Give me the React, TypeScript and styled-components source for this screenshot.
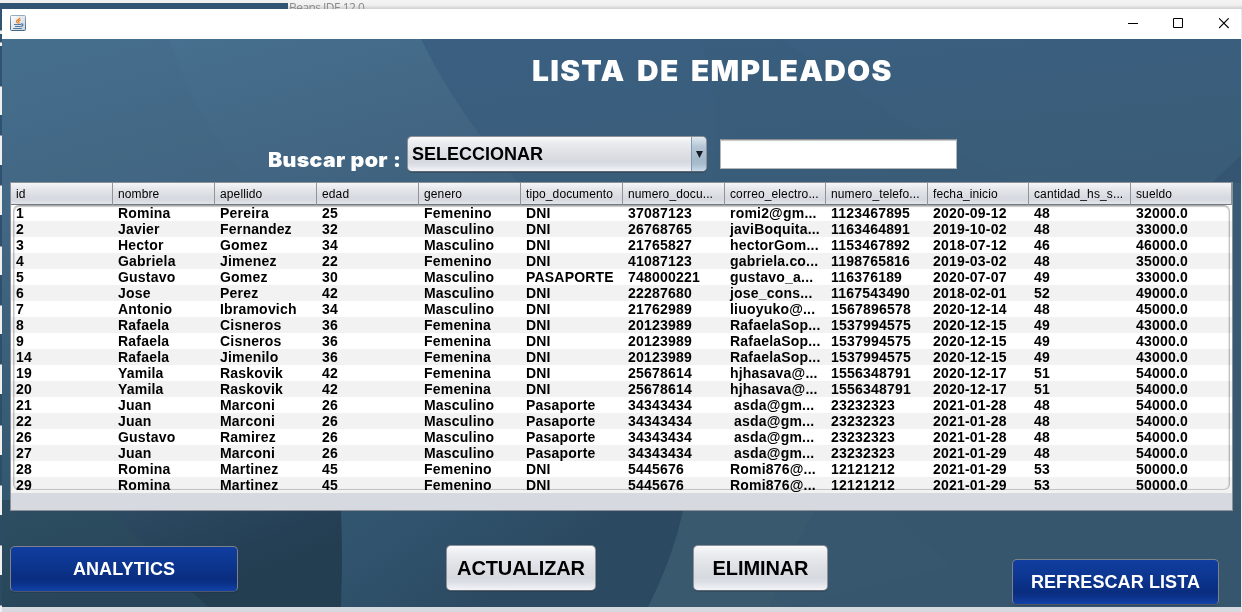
import React from "react";
import styled, { createGlobalStyle, css } from "styled-components";

const Global = createGlobalStyle`
  * { box-sizing: border-box; }
  body { margin: 0; overflow: hidden; font-family: "Liberation Sans", Arial, sans-serif; }
`;

const Desktop = styled.div`
  width: 1242px;
  height: 612px;
  display: grid;
  grid-template: 9px 603px / 2px 1239px 1px;
  overflow: hidden;
  background: #d6d9df;
`;

const BackdropTop = styled.div`
  grid-column: 1 / -1;
  display: flex;
  overflow: hidden;
  background: linear-gradient(#f4f4f4 0, #f0f0f0 5px, #cfcfcf 9px);
`;

const BackdropPanel = styled.div`
  width: 288px;
  height: 9px;
  flex: none;
  border-top: 3px solid #efefef;
  background: #315474;
`;

const BackdropTitle = styled.span`
  margin: 1px 0 0 1px;
  font: 12px/14px "Open Sans", sans-serif;
  letter-spacing: -0.55px;
  color: #8a8a8a;
  white-space: nowrap;
`;

const BackdropEdge = styled.div`
  display: flex;
  flex-direction: column;
  background: linear-gradient(#315474, #2b4b63);
  overflow: hidden;
`;

const EdgeField = styled.i<{ $gap: number; $size: number }>`
  flex: none;
  width: 2px;
  height: ${(p) => p.$size}px;
  margin-top: ${(p) => p.$gap}px;
  background: #f0f0f0;
  border-top: 1px solid #9a9fa6;
`;

const RightEdge = styled.div`
  background: #e6eaf0;
`;

const Window = styled.main`
  display: flex;
  flex-direction: column;
  overflow: hidden;
`;

const TitleBar = styled.header`
  height: 30px;
  flex: none;
  display: flex;
  align-items: flex-start;
  justify-content: space-between;
  padding: 6px 11px 0 8px;
  background: #fff;
`;

const WindowControls = styled.div`
  display: flex;
  gap: 35px;
  padding-top: 3px;
  svg { display: block; }
`;

const Content = styled.section`
  position: relative;
  height: 568px;
  flex: none;
  padding: 0 8px;
  overflow: hidden;
`;

const Wallpaper = styled.svg`
  position: absolute;
  inset: 0;
`;

const Layer = styled.div`
  position: relative;
  display: flex;
  flex-direction: column;
`;

const heavy = css`
  font-family: Inter, "Liberation Sans", sans-serif;
  font-weight: 900;
  color: #fff;
  white-space: nowrap;
  transform-origin: 0 0;
`;

const Heading = styled.h1`
  ${heavy}
  height: 97px;
  width: 400px;
  margin: 0 0 0 522px;
  padding: 15px 0 0;
  font-size: 28px;
  line-height: 34px;
  letter-spacing: 1.2px;
  word-spacing: 4px;
  transform: scaleX(1.068);
`;

const SearchRow = styled.div`
  display: flex;
  align-items: flex-start;
  height: 46px;
  padding-left: 257px;
`;

const SearchLabel = styled.label`
  ${heavy}
  width: 139px;
  margin-left: 1px;
  padding: 12px 0 0;
  font-size: 20px;
  line-height: 24px;
  letter-spacing: 0.3px;
  word-spacing: 0.5px;
  transform: scaleX(1.065);
`;

const silver = css`
  background: linear-gradient(#fbfbfc 0%, #ecedf0 16%, #dfe1e6 45%, #d6d9df 72%, #dcdfe5 82%, #f2f4f8 100%);
`;

const Select = styled.button`
  ${silver}
  display: flex;
  width: 300px;
  height: 36px;
  padding: 0;
  border: 1px solid #8d9097;
  border-bottom-color: #62676f;
  border-radius: 5px;
  overflow: hidden;
  font: bold 18px/35px "Liberation Sans", Arial, sans-serif;
  text-align: left;
  color: #000;
  box-shadow: 0 1px 0 rgba(20, 40, 60, 0.3);
`;

const SelectValue = styled.span`
  flex: 1;
  padding-left: 4px;
`;

const SelectArrow = styled.span`
  width: 15px;
  height: 34px;
  display: flex;
  align-items: center;
  justify-content: center;
  border-left: 1px solid #8197aa;
  background: linear-gradient(#dfe8ef 0%, #b5c7d6 28%, #a3b8ca 65%, #a8bccd 80%, #c8dbea 100%);
`;

const SearchInput = styled.input`
  width: 237px;
  height: 30px;
  margin: 3px 0 0 13px;
  border: 1px solid #b4b5b8;
  border-top-color: #8d8e8f;
  background: #fff;
  box-shadow: inset 0 2px 1px -1px #c4c6c9;
  outline: 0;
`;

const TableFrame = styled.div`
  position: relative;
  width: 1223px;
  height: 329px;
  border: 1px solid #8d9097;
  background: #d6d9df;
`;

const columns = "repeat(7, 102px) 101px 102px 101px 102px 101px";

const HeaderRow = styled.div`
  display: grid;
  grid-template-columns: ${columns};
  height: 22px;
  border-bottom: 1px solid #73777e;
  background: linear-gradient(#f5f6f8 0%, #e4e6ea 30%, #d8dbe1 65%, #d6d9df 80%, #e2e5ea 100%);
`;

const HeaderCell = styled.div`
  padding-left: 5px;
  border-right: 1px solid #8f939a;
  font-size: 12px;
  line-height: 22px;
  letter-spacing: 0.12px;
  color: #000;
  white-space: nowrap;
`;

const Row = styled.div`
  display: grid;
  grid-template-columns: ${columns};
  height: 16px;
  background: #fff;
  &:nth-child(even) { background: #f2f2f2; }
`;

const Cell = styled.div`
  padding-left: 5px;
  font-size: 14px;
  font-weight: bold;
  line-height: 16px;
  letter-spacing: 0.2px;
  color: #000;
  white-space: pre;
`;

const InnerFrame = styled.div`
  position: absolute;
  left: 2px;
  top: 22px;
  width: 1217px;
  height: 285px;
  border: 1px solid #c2c2c2;
  border-top-color: #a8aaac;
  border-bottom-color: #cfcfcf;
  border-radius: 6px;
  box-shadow: inset 0 1px 1px rgba(0, 0, 0, 0.22), inset 1px 0 1px rgba(0, 0, 0, 0.1), inset -1px 0 1px rgba(0, 0, 0, 0.08);
  mix-blend-mode: multiply;
  pointer-events: none;
`;

const Actions = styled.div`
  display: flex;
  align-items: flex-start;
  padding-top: 34px;
`;

const ActionButton = styled.button<{ $primary?: boolean; $width: number; $left?: number; $top?: number }>`
  ${silver}
  width: ${(p) => p.$width}px;
  height: 46px;
  flex: none;
  margin: ${(p) => p.$top ?? 0}px 0 0 ${(p) => p.$left ?? 0}px;
  padding: 0;
  border: 1px solid #8d9097;
  border-bottom-color: #62676f;
  border-radius: 5px;
  font: bold 20px/44px "Liberation Sans", Arial, sans-serif;
  letter-spacing: -0.1px;
  color: #000;
  white-space: nowrap;
  box-shadow: 0 1px 0 rgba(20, 40, 60, 0.25);
  ${(p) =>
    p.$primary &&
    css`
      border-color: #7d8289;
      border-bottom-color: #4d5869;
      font-size: 18px;
      letter-spacing: 0.1px;
      color: #fff;
      background: linear-gradient(#103da0 0%, #0d3791 35%, #092d80 73%, #0b3187 82%, #1141a8 100%);
    `}
`;

const StatusEdge = styled.div`
  height: 5px;
  background: #d6d9df;
`;

const headers = [
  "id", "nombre", "apellido", "edad", "genero", "tipo_documento",
  "numero_docu...", "correo_electro...", "numero_telefo...", "fecha_inicio", "cantidad_hs_s...", "sueldo",
];

const employees = [
  "1|Romina|Pereira|25|Femenino|DNI|37087123|romi2@gm...|1123467895|2020-09-12|48|32000.0",
  "2|Javier|Fernandez|32|Masculino|DNI|26768765|javiBoquita...|1163464891|2019-10-02|48|33000.0",
  "3|Hector|Gomez|34|Masculino|DNI|21765827|hectorGom...|1153467892|2018-07-12|46|46000.0",
  "4|Gabriela|Jimenez|22|Femenino|DNI|41087123|gabriela.co...|1198765816|2019-03-02|48|35000.0",
  "5|Gustavo|Gomez|30|Masculino|PASAPORTE|748000221|gustavo_a...|116376189|2020-07-07|49|33000.0",
  "6|Jose|Perez|42|Masculino|DNI|22287680|jose_cons...|1167543490|2018-02-01|52|49000.0",
  "7|Antonio|Ibramovich|34|Masculino|DNI|21762989|liuoyuko@...|1567896578|2020-12-14|48|45000.0",
  "8|Rafaela|Cisneros|36|Femenina|DNI|20123989|RafaelaSop...|1537994575|2020-12-15|49|43000.0",
  "9|Rafaela|Cisneros|36|Femenina|DNI|20123989|RafaelaSop...|1537994575|2020-12-15|49|43000.0",
  "14|Rafaela|Jimenilo|36|Femenina|DNI|20123989|RafaelaSop...|1537994575|2020-12-15|49|43000.0",
  "19|Yamila|Raskovik|42|Femenina|DNI|25678614|hjhasava@...|1556348791|2020-12-17|51|54000.0",
  "20|Yamila|Raskovik|42|Femenina|DNI|25678614|hjhasava@...|1556348791|2020-12-17|51|54000.0",
  "21|Juan|Marconi|26|Masculino|Pasaporte|34343434| asda@gm...|23232323|2021-01-28|48|54000.0",
  "22|Juan|Marconi|26|Masculino|Pasaporte|34343434| asda@gm...|23232323|2021-01-28|48|54000.0",
  "26|Gustavo|Ramirez|26|Masculino|Pasaporte|34343434| asda@gm...|23232323|2021-01-28|48|54000.0",
  "27|Juan|Marconi|26|Masculino|Pasaporte|34343434| asda@gm...|23232323|2021-01-29|48|54000.0",
  "28|Romina|Martinez|45|Femenino|DNI|5445676|Romi876@...|12121212|2021-01-29|53|50000.0",
  "29|Romina|Martinez|45|Femenino|DNI|5445676|Romi876@...|12121212|2021-01-29|53|50000.0",
].map((line) => line.split("|"));

// [gap above, height] of the light fields peeking out on the left
const edgeFields = [
  [21, 4], [8, 4], [40, 29], [20, 30], [20, 30], [31, 29], [30, 29], [30, 30], [31, 30], [30, 30], [30, 30], [30, 7],
];

const JavaIcon = () => (
  <svg width="16" height="16" viewBox="0 0 16 16">
    <defs>
      <linearGradient id="cup" x1="0" y1="0" x2="1" y2="1">
        <stop offset="0" stopColor="#fff" />
        <stop offset="1" stopColor="#c5d0da" />
      </linearGradient>
      <linearGradient id="rim" x1="0" y1="0" x2="0" y2="1">
        <stop offset="0" stopColor="#94aabd" />
        <stop offset="1" stopColor="#456784" />
      </linearGradient>
    </defs>
    <rect x="0.5" y="0.5" width="15" height="15" rx="1" fill="url(#cup)" stroke="url(#rim)" />
    <path d="M9.8 2.6C10.2 4.4 6.4 4.7 6.5 6.5c.1.9 1 1.2 1.2 1.9M10.6 4.8C8.8 5.6 8.2 6.3 8.8 7.1c.4.5.2 1-.1 1.4" fill="none" stroke="#e8842c" strokeWidth="1.3" />
    <path d="M4 9.5h7M5 11.5h5.5M11 9c2.6-.5 2.4 2-.2 2.4M3.2 13.5h8.6" fill="none" stroke="#4f7ba3" strokeWidth="1.2" />
  </svg>
);

const Background = () => (
  <Wallpaper width="1239" height="568" viewBox="2 39 1239 568">
    <defs>
      <linearGradient id="base" gradientUnits="userSpaceOnUse" x1="150" y1="39" x2="300" y2="607">
        <stop offset="0" stopColor="#46708f" />
        <stop offset="0.25" stopColor="#426683" />
        <stop offset="0.7" stopColor="#345770" />
        <stop offset="1" stopColor="#28465c" />
      </linearGradient>
      <linearGradient id="right" gradientUnits="userSpaceOnUse" x1="700" y1="39" x2="760" y2="607">
        <stop offset="0" stopColor="#3a5f80" />
        <stop offset="0.25" stopColor="#3a5d79" />
        <stop offset="1" stopColor="#36566c" />
      </linearGradient>
      <linearGradient id="band" gradientUnits="userSpaceOnUse" x1="400" y1="500" x2="480" y2="620">
        <stop offset="0" stopColor="#32556f" />
        <stop offset="1" stopColor="#2b4961" />
      </linearGradient>
      <linearGradient id="corner" gradientUnits="userSpaceOnUse" x1="130" y1="500" x2="170" y2="607">
        <stop offset="0" stopColor="#2c4a63" />
        <stop offset="1" stopColor="#233d51" />
      </linearGradient>
      <linearGradient id="low" gradientUnits="userSpaceOnUse" x1="0" y1="500" x2="30" y2="607">
        <stop offset="0" stopColor="#2d4e62" />
        <stop offset="1" stopColor="#28465a" />
      </linearGradient>
    </defs>
    <rect x="2" y="39" width="1239" height="568" fill="url(#base)" />
    <path d="M2 39H169Q192 113 250 183L2 183Z" fill="#406581" opacity="0.18" />
    <path d="M421 39Q455 110 520 185L700 400L683 511H1241V39Z" fill="url(#right)" />
    <path d="M700 39Q725 115 712 182H1010L900 120L780 39Z" fill="#3a5b72" opacity="0.12" />
    <path d="M1241 155L1212 183H1241Z" fill="#31506e" opacity="0.55" />
    <rect x="2" y="500" width="340" height="107" fill="url(#low)" />
    <path d="M110 507Q155 560 208 607H341Q343 555 341 507Z" fill="url(#corner)" />
    <path d="M341 507H684Q673 558 648 607H341Q343 555 341 507Z" fill="url(#band)" />
    <path d="M684 507Q673 558 648 607H1241V507Z" fill="#36566d" />
    <path d="M684 507Q673 558 648 607H770Q790 555 817 507Z" fill="#3b5c72" opacity="0.5" />
    <path d="M817 507H885L952 567L790 607H770Q790 555 817 507Z" fill="#3a5b70" opacity="0.3" />
  </Wallpaper>
);

export default function App() {
  return (
    <>
      <Global />
      <Desktop>
        <BackdropTop>
          <BackdropPanel />
          <BackdropTitle>Beans IDE 12.0</BackdropTitle>
        </BackdropTop>
        <BackdropEdge>
          {edgeFields.map(([gap, size], i) => (
            <EdgeField key={i} $gap={gap} $size={size} />
          ))}
        </BackdropEdge>
        <Window>
          <TitleBar>
            <JavaIcon />
            <WindowControls>
              <svg width="10" height="11"><path d="M0 5.5h10" stroke="#000" /></svg>
              <svg width="11" height="11"><path d="M.5.5h9v9h-9z" fill="none" stroke="#000" /></svg>
              <svg width="11" height="11"><path d="M0 .3l9.7 9.7M9.7 .3l-9.7 9.7" stroke="#000" strokeWidth="1.1" /></svg>
            </WindowControls>
          </TitleBar>
          <Content>
            <Background />
            <Layer>
              <Heading>LISTA DE EMPLEADOS</Heading>
              <SearchRow>
                <SearchLabel>Buscar por :</SearchLabel>
                <Select>
                  <SelectValue>SELECCIONAR</SelectValue>
                  <SelectArrow>
                    <svg width="7" height="7"><path d="M0 0h7L3.5 7z" fill="#151b22" /></svg>
                  </SelectArrow>
                </Select>
                <SearchInput />
              </SearchRow>
              <TableFrame>
                <HeaderRow>
                  {headers.map((h) => <HeaderCell key={h}>{h}</HeaderCell>)}
                </HeaderRow>
                <div>
                  {employees.map((row) => (
                    <Row key={row[0]}>
                      {row.map((value, i) => <Cell key={i}>{value}</Cell>)}
                    </Row>
                  ))}
                </div>
                <InnerFrame />
              </TableFrame>
              <Actions>
                <ActionButton $primary $width={228} $top={1}>ANALYTICS</ActionButton>
                <ActionButton $width={150} $left={208}>ACTUALIZAR</ActionButton>
                <ActionButton $width={135} $left={97}>ELIMINAR</ActionButton>
                <ActionButton $primary $width={207} $left={184} $top={14}>REFRESCAR LISTA</ActionButton>
              </Actions>
            </Layer>
          </Content>
          <StatusEdge />
        </Window>
        <RightEdge />
      </Desktop>
    </>
  );
}
